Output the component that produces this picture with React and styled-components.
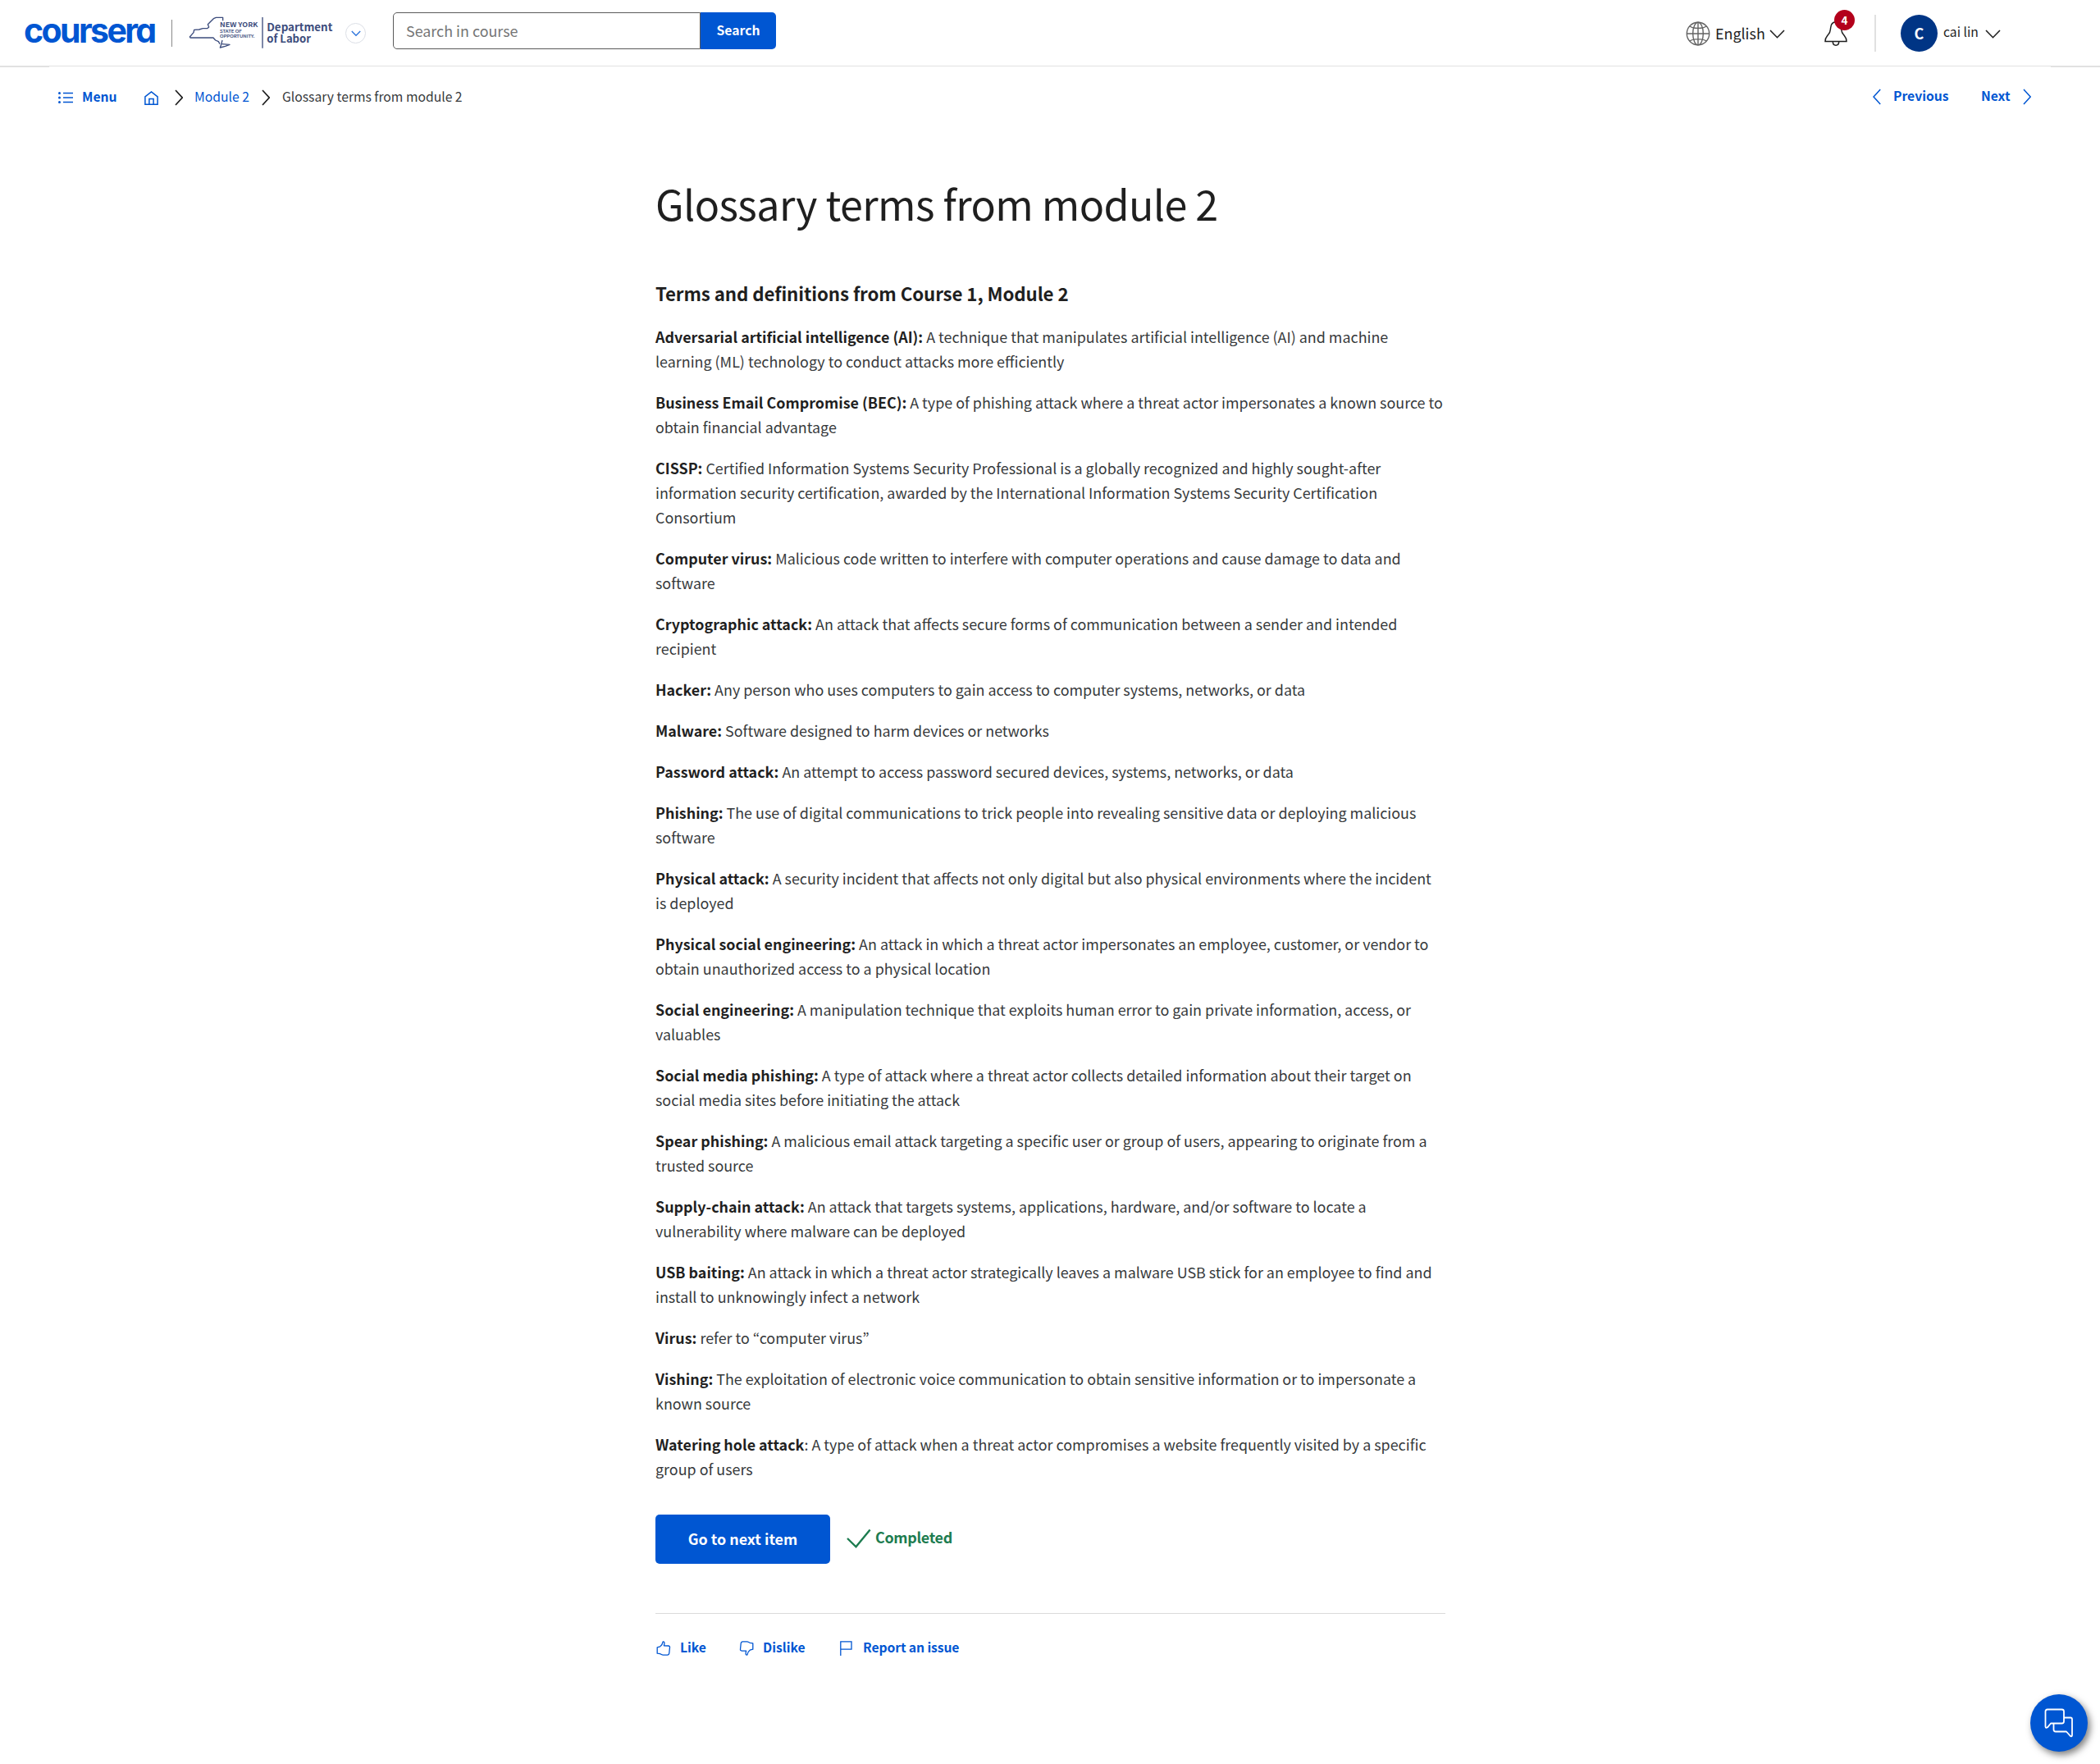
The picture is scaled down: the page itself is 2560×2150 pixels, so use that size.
import React from "react";
import styled, { createGlobalStyle } from "styled-components";

const BLUE = "#0056d2";
const INK = "#1f1f1f";

const GlobalStyle = createGlobalStyle`
  * { box-sizing: border-box; }
  html, body { margin: 0; padding: 0; background: #fff; }
  body {
    font-family: "Noto Sans CJK KR", "Open Sans", sans-serif;
    color: ${INK};
    font-size: 17.9px;
    line-height: 30px;
  }
  svg { display: block; flex: none; }
`;

const Page = styled.div`
  width: 2560px;
  height: 2150px;
  overflow: hidden;
  display: flex;
  flex-direction: column;
`;

const Header = styled.header`
  height: 82px;
  flex: none;
  border-bottom: 2px solid #e1e1e1;
  display: flex;
  align-items: flex-start;
  justify-content: space-between;
  padding: 0 121px 0 29px;
`;

const HeaderGroup = styled.div`
  display: flex;
  align-items: flex-start;
`;

const Wordmark = styled.div`
  width: 162px;
  margin-top: 15px;
  font-family: Inter, "Open Sans", sans-serif;
  font-weight: 700;
  font-size: 41px;
  line-height: 44px;
  letter-spacing: -2.6px;
  font-feature-settings: "cv11";
  color: ${BLUE};
  white-space: nowrap;
`;

const Rule = styled.div`
  width: ${(p) => p.$w}px;
  height: ${(p) => p.$h}px;
  background: ${(p) => p.$color};
  margin: ${(p) => p.$m};
`;

const Partner = styled.div`
  margin: 19px 0 0 20px;
`;

const PartnerToggle = styled.button`
  width: 25px;
  height: 25px;
  margin: 28px 0 0 13px;
  padding: 0;
  border: 1px solid #dcdfe6;
  border-radius: 50%;
  background: #fff;
  display: flex;
  align-items: center;
  justify-content: center;
`;

const SearchForm = styled.div`
  display: flex;
  height: 45px;
  margin: 15px 0 0 33px;
`;

const SearchField = styled.div`
  width: 375px;
  border: 1px solid #5a5a5a;
  border-radius: 5px 0 0 5px;
  padding: 6px 0 0 15px;
  color: #757575;
`;

const SearchButton = styled.button`
  width: 92px;
  border: 0;
  border-radius: 0 5px 5px 0;
  background: ${BLUE};
  color: #fff;
  font: inherit;
  font-weight: 700;
  font-size: 15.7px;
  line-height: 30px;
  padding: 0 0 1px;
`;

const Label = styled.span`
  display: block;
  white-space: nowrap;
  font-size: ${(p) => p.$size || 15.7}px;
  font-weight: ${(p) => p.$weight || 400};
  letter-spacing: ${(p) => p.$ls || 0}px;
  color: ${(p) => p.$color || "inherit"};
  margin: ${(p) => p.$m || 0};
  width: ${(p) => (p.$w ? p.$w + "px" : "auto")};
`;

const IconBox = styled.span`
  display: block;
  margin: ${(p) => p.$m || 0};
`;

const Bell = styled.div`
  position: relative;
  width: 28px;
  margin: 25px 0 0 48px;
`;

const Badge = styled.span`
  position: absolute;
  left: 12px;
  top: -13px;
  width: 25px;
  height: 25px;
  border-radius: 50%;
  background: #b3001b;
  color: #fff;
  font-weight: 700;
  font-size: 13.5px;
  line-height: 25px;
  text-align: center;
`;

const Avatar = styled.div`
  width: 45px;
  height: 45px;
  margin-top: 18px;
  border-radius: 50%;
  background: #003585;
  color: #fff;
  font-weight: 700;
  font-size: 18px;
  line-height: 45px;
  text-align: center;
`;

const Nav = styled.nav`
  height: 80px;
  flex: none;
  margin: -1px 60px 0 60px;
  background: #fff;
  display: flex;
  justify-content: space-between;
  padding: 20px 24px 0 11px;
`;

const NavGroup = styled.div`
  display: flex;
  align-items: flex-start;
  color: ${BLUE};
`;

const Main = styled.main`
  width: 963px;
  margin-left: 799px;
  padding-top: 56px;
`;

const Title = styled.h1`
  margin: 0;
  font-weight: 400;
  font-size: 50.2px;
  line-height: 60px;
  letter-spacing: -0.6px;
  white-space: nowrap;
`;

const Subtitle = styled.h2`
  margin: 65px 0 23px;
  font-weight: 700;
  font-size: 22.3px;
  line-height: 30px;
  letter-spacing: -0.1px;
`;

const Terms = styled.div`
  display: flex;
  flex-direction: column;
  gap: 20px;
`;

const Term = styled.p`
  margin: 0;
  color: #373a3c;
  b { color: ${INK}; font-weight: 700; }
`;

const TermLine = styled.span`
  display: block;
  white-space: nowrap;
`;

const Actions = styled.div`
  display: flex;
  align-items: flex-start;
  height: 121px;
  margin-top: 41px;
  border-bottom: 1px solid #dadada;
`;

const PrimaryButton = styled.button`
  width: 213px;
  height: 60px;
  border: 0;
  border-radius: 5px;
  background: ${BLUE};
  color: #fff;
  font: inherit;
  font-weight: 700;
  font-size: 17.9px;
  line-height: 30px;
  padding: 0 0 2px;
`;

const Feedback = styled.div`
  display: flex;
  align-items: flex-start;
  color: ${BLUE};
  padding: 25px 0 0 1px;
`;

const ChatButton = styled.button`
  position: absolute;
  left: 2475px;
  top: 2065px;
  width: 70px;
  height: 70px;
  padding: 0;
  border: 0;
  border-radius: 50%;
  background: ${BLUE};
  box-shadow: 3px 4px 8px rgba(0, 0, 0, 0.5);
  display: flex;
  align-items: center;
  justify-content: center;
`;

function Line({ w, h, d, color = "currentColor", sw = 1.5, join = "miter" }) {
  return (
    <svg width={w} height={h} viewBox={`0 0 ${w} ${h}`} fill="none" stroke={color} strokeWidth={sw} strokeLinejoin={join}>
      <path d={d} />
    </svg>
  );
}

const RIGHT = "M1 1 L9.2 10 L1 19";
const LEFT = "M9.2 1 L1 10 L9.2 19";
const DOWN = "M1 1 L9.5 9.7 L18 1";

function LaborLogo() {
  const ink = "#3c4c7c";
  return (
    <svg width="178" height="42" viewBox="28 28 534 126" fill={ink} fontWeight="700">
      <g fill="none" stroke={ink} strokeWidth="4" strokeLinejoin="round">
        <path d="M153 47V35H128L119 39L98 60L102 70L96 75L80 75L66 79L48 80L46 90L32 106L34 109H118L126 118L137 123L142 132" />
        <path d="M151 118L147 134L143 145L162 140L178 134L150 132" />
        <path d="M298 34V147" />
      </g>
      <text x="142" y="71" fontSize="24" textLength="139" lengthAdjust="spacingAndGlyphs">NEW YORK</text>
      <text x="142" y="91" fontSize="15" fontWeight="400" stroke={ink} strokeWidth=".5" textLength="80" lengthAdjust="spacingAndGlyphs">STATE OF</text>
      <text x="142" y="109" fontSize="15" fontWeight="400" stroke={ink} strokeWidth=".5" textLength="127" lengthAdjust="spacingAndGlyphs">OPPORTUNITY.</text>
      <text x="314" y="84" fontSize="39" textLength="240" lengthAdjust="spacingAndGlyphs">Department</text>
      <text x="314" y="127" fontSize="39" textLength="161" lengthAdjust="spacingAndGlyphs">of Labor</text>
    </svg>
  );
}

const TERMS = [
  ["Adversarial artificial intelligence (AI):", "A technique that manipulates artificial intelligence (AI) and machine\nlearning (ML) technology to conduct attacks more efficiently"],
  ["Business Email Compromise (BEC):", "A type of phishing attack where a threat actor impersonates a known source to\nobtain financial advantage"],
  ["CISSP:", "Certified Information Systems Security Professional is a globally recognized and highly sought-after\ninformation security certification, awarded by the International Information Systems Security Certification\nConsortium"],
  ["Computer virus:", "Malicious code written to interfere with computer operations and cause damage to data and\nsoftware"],
  ["Cryptographic attack:", "An attack that affects secure forms of communication between a sender and intended\nrecipient"],
  ["Hacker:", "Any person who uses computers to gain access to computer systems, networks, or data"],
  ["Malware:", "Software designed to harm devices or networks"],
  ["Password attack:", "An attempt to access password secured devices, systems, networks, or data"],
  ["Phishing:", "The use of digital communications to trick people into revealing sensitive data or deploying malicious\nsoftware"],
  ["Physical attack:", "A security incident that affects not only digital but also physical environments where the incident\nis deployed"],
  ["Physical social engineering:", "An attack in which a threat actor impersonates an employee, customer, or vendor to\nobtain unauthorized access to a physical location"],
  ["Social engineering:", "A manipulation technique that exploits human error to gain private information, access, or\nvaluables"],
  ["Social media phishing:", "A type of attack where a threat actor collects detailed information about their target on\nsocial media sites before initiating the attack"],
  ["Spear phishing:", "A malicious email attack targeting a specific user or group of users, appearing to originate from a\ntrusted source"],
  ["Supply-chain attack:", "An attack that targets systems, applications, hardware, and/or software to locate a\nvulnerability where malware can be deployed"],
  ["USB baiting:", "An attack in which a threat actor strategically leaves a malware USB stick for an employee to find and\ninstall to unknowingly infect a network"],
  ["Virus:", "refer to “computer virus”"],
  ["Vishing:", "The exploitation of electronic voice communication to obtain sensitive information or to impersonate a\nknown source"],
  ["Watering hole attack", "A type of attack when a threat actor compromises a website frequently visited by a specific\ngroup of users", ":"],
];

const THUMB = "M1.2 7.8 L4.8 6.8 C6.4 5.6 7.6 3.8 7.9 1.6 C8 .6 9.6 .6 9.9 1.8 C10 3.2 9.8 4.4 9.4 5.8 L14.8 6 C16.2 6.1 16.6 6.9 16.5 7.8 L15.8 14.8 C15.6 16.6 14.8 17.2 13.6 17.2 H8.4 C6.6 17.2 5.8 16 4.4 15.6 L1.2 15.2 Z";

export default function App() {
  return (
    <Page>
      <GlobalStyle />
      <Header>
        <HeaderGroup>
          <Wordmark>coursera</Wordmark>
          <Rule $w={1} $h={33} $color="#8a8a8a" $m="24px 0 0 18px" />
          <Partner><LaborLogo /></Partner>
          <PartnerToggle>
            <Line w={12} h={8} d="M.8 1 L6 6.3 L11.2 1" color="#2a73dc" sw={1.3} />
          </PartnerToggle>
          <SearchForm>
            <SearchField>Search in course</SearchField>
            <SearchButton>Search</SearchButton>
          </SearchForm>
        </HeaderGroup>
        <HeaderGroup>
          <IconBox $m="26px 6px 0 0">
            <svg width="30" height="30" viewBox="0 0 30 30" fill="none" stroke="#636363" strokeWidth="1.4">
              <circle cx="15" cy="15" r="13.7" />
              <ellipse cx="15" cy="15" rx="6.3" ry="13.7" />
              <path d="M15 1.3V28.7M1.3 15H28.7M5 6C9 9.2 21 9.2 25 6M5 24C9 20.8 21 20.8 25 24" />
            </svg>
          </IconBox>
          <Label $size={17.9} $m="25px 0 0" $w={66}>English</Label>
          <IconBox $m="36px 0 0"><Line w={19} h={12} d={DOWN} color={INK} sw={1.6} /></IconBox>
          <Bell>
            <svg width="28" height="32" viewBox="0 0 28 32" fill="none" stroke={INK} strokeWidth="1.5">
              <path d="M1 25.5H27C27.2 21.5 25.5 20 23.5 17.5C20.5 14.5 21 12.5 20.5 9C20 4.5 17.5 1.8 14 1.8C10.5 1.8 8 4.5 7.6 9C7.2 12.5 7.5 14.5 4.5 17.5C2.5 20 .8 21.5 1 25.5Z" />
              <path d="M10.3 25.7C10.3 31.6 17.7 31.6 17.7 25.7" />
            </svg>
            <Badge>4</Badge>
          </Bell>
          <Rule $w={2} $h={45} $color="#e1e1e1" $m="18px 30px 0 33px" />
          <Avatar>C</Avatar>
          <Label $m="24px 0 0 7px" $w={51}>cai lin</Label>
          <IconBox $m="36px 0 0"><Line w={19} h={12} d={DOWN} color={INK} sw={1.6} /></IconBox>
        </HeaderGroup>
      </Header>

      <Nav>
        <NavGroup>
          <IconBox $m="11px 0 0">
            <svg width="18" height="14" viewBox="0 0 18 14" fill={BLUE} stroke={BLUE}>
              <path d="M6 1.5H18M6 7H18M6 12.5H18" strokeWidth="1.3" />
              <g stroke="none"><circle cx="1.5" cy="1.5" r="1.5" /><circle cx="1.5" cy="7" r="1.5" /><circle cx="1.5" cy="12.5" r="1.5" /></g>
            </svg>
          </IconBox>
          <Label $weight={700} $m="2px 0 0 11px" $w={76}>Menu</Label>
          <IconBox $m="10px 0 0"><Line w={17} h={17} d="M.9 16.2V6.8L8.5 .9L16.1 6.8V16.2ZM5.9 16V9.4H11.1V16" sw={1.5} /></IconBox>
          <IconBox $m="8px 0 0 20px"><Line w={10} h={20} d={RIGHT} color={INK} sw={1.7} /></IconBox>
          <Label $m="2px 0 0 14px" $w={82}>Module 2</Label>
          <IconBox $m="8px 0 0"><Line w={10} h={20} d={RIGHT} color={INK} sw={1.7} /></IconBox>
          <Label $m="2px 0 0 15px" $color="#373a3c">Glossary terms from module 2</Label>
        </NavGroup>
        <NavGroup>
          <IconBox $m="7px 0 0"><Line w={10} h={20} d={LEFT} sw={1.5} /></IconBox>
          <Label $weight={700} $m="1px 0 0 15px" $w={107}>Previous</Label>
          <Label $weight={700} $m="1px 0 0" $w={51}>Next</Label>
          <IconBox $m="7px 0 0"><Line w={10} h={20} d={RIGHT} sw={1.5} /></IconBox>
        </NavGroup>
      </Nav>

      <Main>
        <Title>Glossary terms from module 2</Title>
        <Subtitle>Terms and definitions from Course 1, Module 2</Subtitle>
        <Terms>
          {TERMS.map(([name, text, mark]) => (
            <Term key={name}>
              {text.split("\n").map((line, i) => (
                <TermLine key={line}>
                  {i === 0 && <b>{name}</b>}
                  {i === 0 ? `${mark || ""} ${line}` : line}
                </TermLine>
              ))}
            </Term>
          ))}
        </Terms>
        <Actions>
          <PrimaryButton>Go to next item</PrimaryButton>
          <IconBox $m="17px 0 0 20px"><Line w={30} h={26} d="M1 12L11.5 22.3L28.6 1.5" color="#1d7c50" sw={2.4} /></IconBox>
          <Label $size={17.9} $weight={700} $ls={-0.3} $color="#1d7c50" $m="12px 0 0 5px">Completed</Label>
        </Actions>
        <Feedback>
          <IconBox $m="8px 0 0"><Line w={18} h={18} d={THUMB} sw={1.3} join="round" /></IconBox>
          <Label $weight={700} $m="1px 0 0 11px" $w={72}>Like</Label>
          <IconBox $m="8px 0 0">
            <svg width="18" height="18" viewBox="0 0 18 18" fill="none" stroke={BLUE} strokeWidth="1.3" strokeLinejoin="round">
              <path transform="rotate(180 9 9)" d={THUMB} />
            </svg>
          </IconBox>
          <Label $weight={700} $m="1px 0 0 11px" $w={94}>Dislike</Label>
          <IconBox $m="8px 0 0"><Line w={15} h={18} d="M.8 18V.8H14V10.2H.8" sw={1.3} /></IconBox>
          <Label $weight={700} $ls={-0.1} $m="1px 0 0 13px">Report an issue</Label>
        </Feedback>
      </Main>

      <ChatButton>
        <svg width="36" height="36" viewBox="0 0 36 36" fill="none" stroke="#fff" strokeWidth="1.8" strokeLinejoin="round">
          <path d="M4 1.5H21.5Q24 1.5 24 4V16Q24 18.5 21.5 18.5H8L4 23.3Q1.8 24.8 1.5 22.5V4Q1.5 1.5 4 1.5Z" />
          <path d="M24 11.5H32Q34 11.5 34 13.5V33Q33.5 35.5 31.5 33.5L27 28.5H14Q11.5 28.5 11.5 26V18.5" />
        </svg>
      </ChatButton>
    </Page>
  );
}
